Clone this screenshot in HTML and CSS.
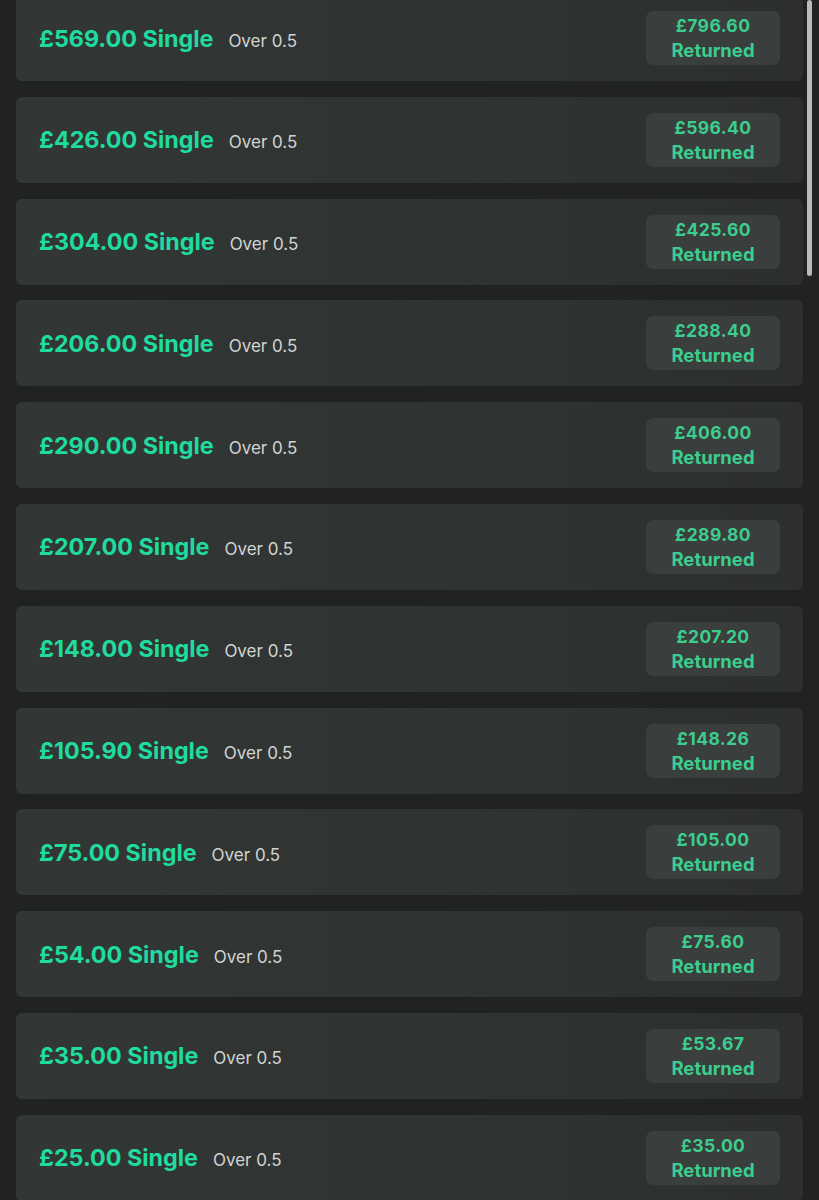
FILE: index.html
```html
<!DOCTYPE html>
<html lang="en">
<head>
  <meta charset="UTF-8">
  <meta name="viewport" content="width=device-width, initial-scale=1.0">
  <title>Settled Bets</title>
  <link rel="stylesheet" href="styles.css">
</head>
<body>

  <!-- Settled bet list -->
  <div class="bet-list">
    <div class="bet">
      <div class="bet-title"><span class="stake">£569.00 Single</span><span class="selection">Over 0.5</span></div>
      <div class="returned"><span class="amount">£796.60</span><span class="label">Returned</span></div>
    </div>
    <div class="bet">
      <div class="bet-title"><span class="stake">£426.00 Single</span><span class="selection">Over 0.5</span></div>
      <div class="returned"><span class="amount">£596.40</span><span class="label">Returned</span></div>
    </div>
    <div class="bet">
      <div class="bet-title"><span class="stake">£304.00 Single</span><span class="selection">Over 0.5</span></div>
      <div class="returned"><span class="amount">£425.60</span><span class="label">Returned</span></div>
    </div>
    <div class="bet">
      <div class="bet-title"><span class="stake">£206.00 Single</span><span class="selection">Over 0.5</span></div>
      <div class="returned"><span class="amount">£288.40</span><span class="label">Returned</span></div>
    </div>
    <div class="bet">
      <div class="bet-title"><span class="stake">£290.00 Single</span><span class="selection">Over 0.5</span></div>
      <div class="returned"><span class="amount">£406.00</span><span class="label">Returned</span></div>
    </div>
    <div class="bet">
      <div class="bet-title"><span class="stake">£207.00 Single</span><span class="selection">Over 0.5</span></div>
      <div class="returned"><span class="amount">£289.80</span><span class="label">Returned</span></div>
    </div>
    <div class="bet">
      <div class="bet-title"><span class="stake">£148.00 Single</span><span class="selection">Over 0.5</span></div>
      <div class="returned"><span class="amount">£207.20</span><span class="label">Returned</span></div>
    </div>
    <div class="bet">
      <div class="bet-title"><span class="stake">£105.90 Single</span><span class="selection">Over 0.5</span></div>
      <div class="returned"><span class="amount">£148.26</span><span class="label">Returned</span></div>
    </div>
    <div class="bet">
      <div class="bet-title"><span class="stake">£75.00 Single</span><span class="selection">Over 0.5</span></div>
      <div class="returned"><span class="amount">£105.00</span><span class="label">Returned</span></div>
    </div>
    <div class="bet">
      <div class="bet-title"><span class="stake">£54.00 Single</span><span class="selection">Over 0.5</span></div>
      <div class="returned"><span class="amount">£75.60</span><span class="label">Returned</span></div>
    </div>
    <div class="bet">
      <div class="bet-title"><span class="stake">£35.00 Single</span><span class="selection">Over 0.5</span></div>
      <div class="returned"><span class="amount">£53.67</span><span class="label">Returned</span></div>
    </div>
    <div class="bet">
      <div class="bet-title"><span class="stake">£25.00 Single</span><span class="selection">Over 0.5</span></div>
      <div class="returned"><span class="amount">£35.00</span><span class="label">Returned</span></div>
    </div>
  </div>

  <!-- Scroll indicator -->
  <div class="scroll-thumb"></div>

</body>
</html>
```

FILE: styles.css
```css
html {
  overflow: hidden;
}

body {
  margin: 0;
  padding: 0 16px;
  background-color: #212322;
  font-family: Inter, "Liberation Sans", Arial, sans-serif;
}

/* List of bet cards */
.bet-list {
  display: flex;
  flex-direction: column;
  gap: 15.8px;
  margin-top: -5px;
}

.bet {
  height: 86px;
  box-sizing: border-box;
  padding: 0 23px;
  display: flex;
  align-items: center;
  justify-content: space-between;
  border-radius: 6px;
  background: linear-gradient(90deg, #323735 0%, #2f3332 60%, #2c2f2e 100%);
}

.bet-title {
  white-space: nowrap;
}

.stake {
  font-size: 23.3px;
  font-weight: bold;
  color: #1fdc9e;
}

.selection {
  margin-left: 15px;
  font-size: 17px;
  color: #d2d4d3;
}

/* Returned badge */
.returned {
  width: 134px;
  height: 54px;
  border-radius: 7px;
  background-color: #3a3e3c;
  display: flex;
  flex-direction: column;
  align-items: center;
  justify-content: center;
  font-weight: bold;
  color: #3ccd8f;
  line-height: 24px;
}

.amount {
  font-size: 17.5px;
  letter-spacing: 0.4px;
}

.label {
  font-size: 18.5px;
}

.scroll-thumb {
  position: fixed;
  top: 0;
  right: 7px;
  width: 5px;
  height: 276px;
  border-radius: 3px;
  background-color: #b9bbba;
}
```
